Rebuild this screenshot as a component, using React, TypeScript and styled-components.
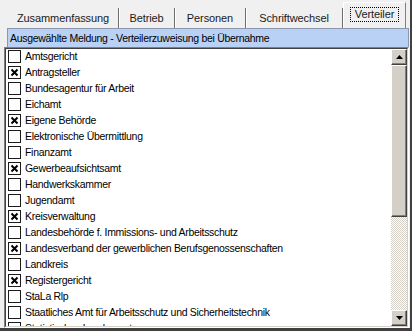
import React from 'react'
import styled, { createGlobalStyle } from 'styled-components'

const GlobalStyle = createGlobalStyle`
  html, body {
    margin: 0;
    padding: 0;
    background: #f0f0f0;
    overflow: hidden;
  }
  body {
    font-family: 'Liberation Sans', Arial, sans-serif;
    font-size: 10.5px;
    letter-spacing: -0.3px;
    color: #000;
  }
`

// label, tab width
const tabs: [string, number][] = [
  ['Zusammenfassung', 111],
  ['Betrieb', 56],
  ['Personen', 71],
  ['Schriftwechsel', 97],
  ['Verteiler', 63],
]

const items: [string, boolean][] = [
  ['Amtsgericht', false],
  ['Antragsteller', true],
  ['Bundesagentur für Arbeit', false],
  ['Eichamt', false],
  ['Eigene Behörde', true],
  ['Elektronische Übermittlung', false],
  ['Finanzamt', false],
  ['Gewerbeaufsichtsamt', true],
  ['Handwerkskammer', false],
  ['Jugendamt', false],
  ['Kreisverwaltung', true],
  ['Landesbehörde f. Immissions- und  Arbeitsschutz', false],
  ['Landesverband der gewerblichen Berufsgenossenschaften', true],
  ['Landkreis', false],
  ['Registergericht', true],
  ['StaLa Rlp', false],
  ['Staatliches Amt für Arbeitsschutz und Sicherheitstechnik', false],
  ['Statistisches Landesamt', false],
]

const Window = styled.div`
  width: 412px;
  height: 331px;
  display: flex;
  flex-direction: column;
  box-sizing: border-box;
  border-right: 2px solid #404040;
  border-bottom: 3px solid #404040;
  background: #f0f0f0;
  overflow: hidden;
`

const TabBar = styled.div`
  display: flex;
  align-items: flex-end;
  height: 28px;
  padding-left: 8px;
  box-sizing: border-box;
`

const Tab = styled.div<{ $active?: boolean; $w: number }>`
  width: ${(p) => p.$w}px;
  box-sizing: border-box;
  height: ${(p) => (p.$active ? '26px' : '20px')};
  display: flex;
  align-items: ${(p) => (p.$active ? 'flex-start' : 'center')};
  padding-top: ${(p) => (p.$active ? '4px' : '0')};
  justify-content: center;
  border-right: 1px solid ${(p) => (p.$active ? '#808080' : '#6e6e6e')};
  border-left: ${(p) => (p.$active ? '1px solid #ffffff' : 'none')};
  border-top: ${(p) => (p.$active ? '1px solid #ffffff' : 'none')};
  box-shadow: ${(p) => (p.$active ? 'none' : '1px 0 0 #ffffff')};
  white-space: nowrap;
  font-size: 11px;
  letter-spacing: -0.1px;
  color: #1a1a1a;
`

const FocusLabel = styled.span`
  border: 1px dotted #000;
  padding: 0 4px 1px;
`

const Panel = styled.div`
  flex: 1;
  display: flex;
  flex-direction: column;
  padding: 0 1px 0 4px;
  min-height: 0;
`

const Header = styled.div`
  height: 19px;
  box-sizing: border-box;
  margin-left: 3px;
  border: 1px solid #8a97ad;
  border-bottom: none;
  background: #b9d1f5;
  padding-left: 2px;
  display: flex;
  align-items: center;
  white-space: nowrap;
`

const ListFrame = styled.div`
  flex: 1;
  min-height: 0;
  display: flex;
  border-top: 1px solid #808080;
  border-left: 1px solid #808080;
  border-right: 1px solid #ffffff;
  border-bottom: 1px solid #ffffff;
`

const ListInner = styled.div`
  flex: 1;
  min-height: 0;
  display: flex;
  border-top: 1px solid #404040;
  border-left: 1px solid #404040;
  border-right: 1px solid #d4d0c8;
  border-bottom: 1px solid #d4d0c8;
  background: #ffffff;
`

const Items = styled.div`
  flex: 1;
  overflow: hidden;
  padding: 0 0 0 2px;
  margin-top: -1px;
`

const Row = styled.div`
  height: 16px;
  display: flex;
  align-items: center;
  gap: 4px;
  white-space: nowrap;
`

const Check = styled.span`
  width: 13px;
  height: 13px;
  box-sizing: border-box;
  border: 1px solid #1c1c1c;
  display: flex;
  align-items: center;
  justify-content: center;
  flex: none;
`

const ScrollBar = styled.div`
  width: 16px;
  display: flex;
  flex-direction: column;
  background-color: #d4d0c8;
  background-image: conic-gradient(#ffffff 25%, #d4d0c8 0 50%, #ffffff 0 75%, #d4d0c8 0);
  background-size: 2px 2px;
`

const ScrollButton = styled.div`
  height: 16px;
  box-sizing: border-box;
  background: #d4d0c8;
  border-top: 1px solid #ffffff;
  border-left: 1px solid #ffffff;
  border-right: 1px solid #404040;
  border-bottom: 1px solid #404040;
  box-shadow: inset -1px -1px 0 #808080;
  display: flex;
  align-items: center;
  justify-content: center;
  flex: none;
`

const Thumb = styled(ScrollButton)`
  height: 152px;
`

const Track = styled.div`
  flex: 1;
`

const Arrow = ({ down }: { down?: boolean }) => (
  <svg width="7" height="4" viewBox="0 0 7 4">
    <path d={down ? 'M0 0H7L3.5 4Z' : 'M0 4H7L3.5 0Z'} fill="#000" />
  </svg>
)

const Cross = () => (
  <svg width="9" height="9" viewBox="0 0 9 9">
    <path d="M1.5 1.5L7.5 7.5M7.5 1.5L1.5 7.5" stroke="#000" strokeWidth="2" />
  </svg>
)

export default function App() {
  return (
    <>
      <GlobalStyle />
      <Window>
        <TabBar>
          {tabs.map(([t, w], i) =>
            i === tabs.length - 1 ? (
              <Tab key={t} $w={w} $active>
                <FocusLabel>{t}</FocusLabel>
              </Tab>
            ) : (
              <Tab key={t} $w={w}>
                {t}
              </Tab>
            )
          )}
        </TabBar>
        <Panel>
          <Header>Ausgewählte Meldung - Verteilerzuweisung bei Übernahme</Header>
          <ListFrame>
            <ListInner>
              <Items>
                {items.map(([label, checked]) => (
                  <Row key={label}>
                    <Check>{checked && <Cross />}</Check>
                    <span>{label}</span>
                  </Row>
                ))}
              </Items>
              <ScrollBar>
                <ScrollButton>
                  <Arrow />
                </ScrollButton>
                <Thumb />
                <Track />
                <ScrollButton>
                  <Arrow down />
                </ScrollButton>
              </ScrollBar>
            </ListInner>
          </ListFrame>
        </Panel>
      </Window>
    </>
  )
}
